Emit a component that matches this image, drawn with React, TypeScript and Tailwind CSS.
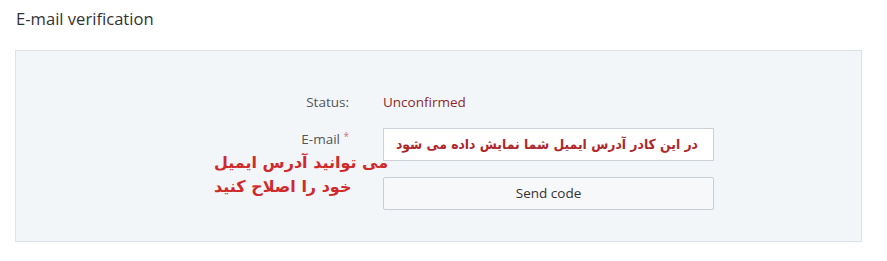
export default function App() {
  return (
    <div className="relative w-[887px] h-[261px] bg-white" style={{ fontFamily: '"Open Sans", "Noto Sans", sans-serif' }}>
      <div className="pl-4 pt-[7px] text-[16.6px] leading-[24px] text-[#333]">E-mail verification</div>
      <div className="mt-[19px] ml-[15px] w-[847px] h-[192px] border border-[#dde3e8] bg-[#f3f6f9] pt-[41px]">
        <div className="flex items-center h-5">
          <div className="w-[333px] text-right text-[13.5px] text-[#555]">Status:</div>
          <div className="ml-[34px] text-[13.5px] text-[#8b2a2a]">Unconfirmed</div>
        </div>
        <div className="flex mt-4">
          <div className="w-[333px] text-right text-[13.5px] text-[#555] pt-[1px]">
            E-mail <span className="text-[#c77] text-[10px] align-top">*</span>
          </div>
          <div className="ml-[34px] flex flex-col gap-4">
            <div
              dir="rtl"
              className="w-[331px] h-[33px] border border-[#ccd2d8] bg-white flex items-center pr-[15px] text-[13.8px] font-bold text-[#b0272a] whitespace-nowrap overflow-hidden"
              style={{ fontFamily: '"DejaVu Sans Condensed", "DejaVu Sans", sans-serif' }}
            >
              در این کادر آدرس ایمیل شما نمایش داده می شود
            </div>
            <div className="w-[331px] h-[33px] border border-[#c8ced4] rounded-[2px] bg-[#f6f8fa] flex items-center justify-center text-[13.5px] text-[#333]">
              Send code
            </div>
          </div>
        </div>
      </div>
      <div
        className="absolute left-[214px] top-[151px] text-[16px] leading-[24px] font-bold text-[#d02a2a]"
        style={{ fontFamily: '"DejaVu Sans", sans-serif' }}
      >
        <div dir="rtl" className="text-left w-max">می توانید آدرس ایمیل</div>
        <div dir="rtl" className="text-left w-max">خود را اصلاح کنید</div>
      </div>
    </div>
  );
}
